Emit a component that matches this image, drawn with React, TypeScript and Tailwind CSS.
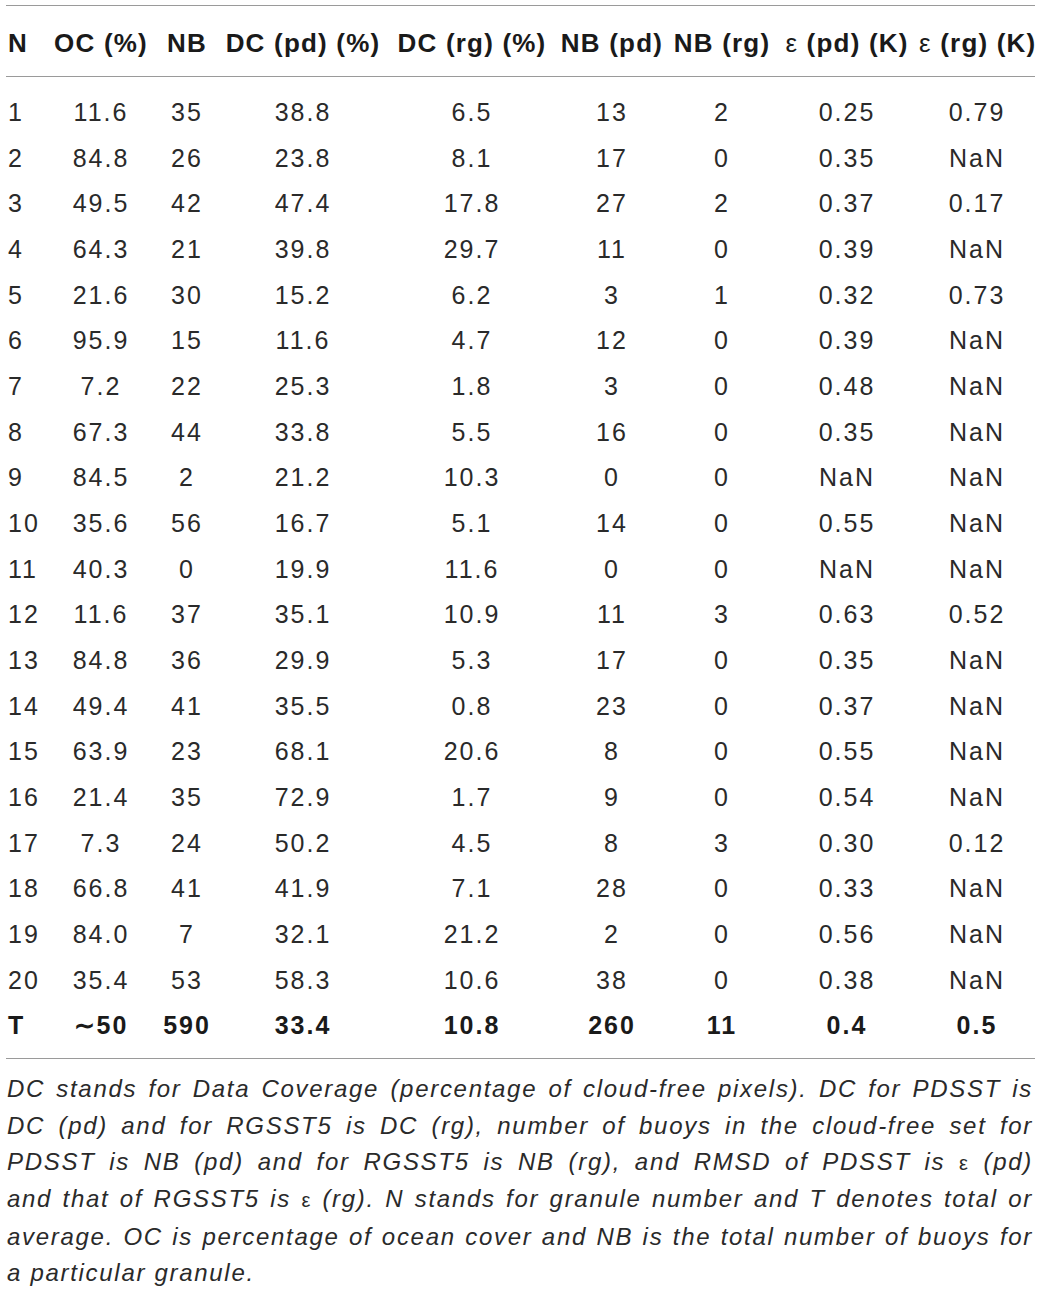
import React from 'react'

const COLS = 'grid grid-cols-[39px_112px_60px_172px_166px_114px_106px_144px_116px]'

// 表データ
const ROWS: string[][] = [
  ['1', '11.6', '35', '38.8', '6.5', '13', '2', '0.25', '0.79'],
  ['2', '84.8', '26', '23.8', '8.1', '17', '0', '0.35', 'NaN'],
  ['3', '49.5', '42', '47.4', '17.8', '27', '2', '0.37', '0.17'],
  ['4', '64.3', '21', '39.8', '29.7', '11', '0', '0.39', 'NaN'],
  ['5', '21.6', '30', '15.2', '6.2', '3', '1', '0.32', '0.73'],
  ['6', '95.9', '15', '11.6', '4.7', '12', '0', '0.39', 'NaN'],
  ['7', '7.2', '22', '25.3', '1.8', '3', '0', '0.48', 'NaN'],
  ['8', '67.3', '44', '33.8', '5.5', '16', '0', '0.35', 'NaN'],
  ['9', '84.5', '2', '21.2', '10.3', '0', '0', 'NaN', 'NaN'],
  ['10', '35.6', '56', '16.7', '5.1', '14', '0', '0.55', 'NaN'],
  ['11', '40.3', '0', '19.9', '11.6', '0', '0', 'NaN', 'NaN'],
  ['12', '11.6', '37', '35.1', '10.9', '11', '3', '0.63', '0.52'],
  ['13', '84.8', '36', '29.9', '5.3', '17', '0', '0.35', 'NaN'],
  ['14', '49.4', '41', '35.5', '0.8', '23', '0', '0.37', 'NaN'],
  ['15', '63.9', '23', '68.1', '20.6', '8', '0', '0.55', 'NaN'],
  ['16', '21.4', '35', '72.9', '1.7', '9', '0', '0.54', 'NaN'],
  ['17', '7.3', '24', '50.2', '4.5', '8', '3', '0.30', '0.12'],
  ['18', '66.8', '41', '41.9', '7.1', '28', '0', '0.33', 'NaN'],
  ['19', '84.0', '7', '32.1', '21.2', '2', '0', '0.56', 'NaN'],
  ['20', '35.4', '53', '58.3', '10.6', '38', '0', '0.38', 'NaN'],
]

const TOTAL = ['T', '∼50', '590', '33.4', '10.8', '260', '11', '0.4', '0.5']

const Eps = () => <span className="font-normal">ε</span>

const HEADERS: React.ReactNode[] = [
  'N',
  'OC (%)',
  'NB',
  'DC (pd) (%)',
  'DC (rg) (%)',
  'NB (pd)',
  'NB (rg)',
  <>
    <Eps /> (pd) (K)
  </>,
  <>
    <Eps /> (rg) (K)
  </>,
]

function Row({ cells, bold }: { cells: string[]; bold?: boolean }) {
  return (
    <div className={`${COLS} h-[45.68px] items-center ${bold ? 'font-bold text-[#1a1a1a]' : 'text-[#2a2a2a]'}`}>
      {cells.map((c, i) => (
        <div key={i} className={`whitespace-nowrap ${i === 0 ? 'pl-[2px] text-left' : 'text-center'}`}>
          {c}
        </div>
      ))}
    </div>
  )
}

const ep = <span className="not-italic text-[20px]">ε</span>

export default function App() {
  return (
    <div className="w-[1041px] bg-white pt-[5px] font-['Liberation_Sans',Arial,sans-serif]">
      <div className="ml-[6px] w-[1029px]">
        {/* ヘッダー */}
        <div className="border-t border-b border-[#9a9a9a]">
          <div className={`${COLS} pt-[22px] pb-[18px] text-[26px] leading-[30px] font-bold tracking-[1.2px] text-[#1a1a1a]`}>
            {HEADERS.map((h, i) => (
              <div key={i} className={`whitespace-nowrap ${i === 0 ? 'pl-[2px] text-left' : 'text-center'}`}>
                {h}
              </div>
            ))}
          </div>
        </div>

        {/* 本体 */}
        <div className="border-b border-[#9a9a9a] pt-[12px] pb-[10px] text-[25px] leading-[30px] tracking-[2px]">
          {ROWS.map((r) => (
            <Row key={r[0]} cells={r} />
          ))}
          <Row cells={TOTAL} bold />
        </div>
      </div>

      {/* 注記 */}
      <div className="ml-[7px] w-[1026px] pt-[12px] text-[24px] leading-[36.4px] italic tracking-[1.7px] text-[#2a2a2a]">
        <p className="text-justify [text-align-last:justify]">
          DC stands for Data Coverage (percentage of cloud-free pixels). DC for PDSST is
        </p>
        <p className="text-justify [text-align-last:justify]">
          DC (pd) and for RGSST5 is DC (rg), number of buoys in the cloud-free set for
        </p>
        <p className="text-justify [text-align-last:justify]">
          PDSST is NB (pd) and for RGSST5 is NB (rg), and RMSD of PDSST is {ep} (pd)
        </p>
        <p className="text-justify [text-align-last:justify]">
          and that of RGSST5 is {ep} (rg). N stands for granule number and T denotes total or
        </p>
        <p className="text-justify [text-align-last:justify]">
          average. OC is percentage of ocean cover and NB is the total number of buoys for
        </p>
        <p>a particular granule.</p>
      </div>
    </div>
  )
}
